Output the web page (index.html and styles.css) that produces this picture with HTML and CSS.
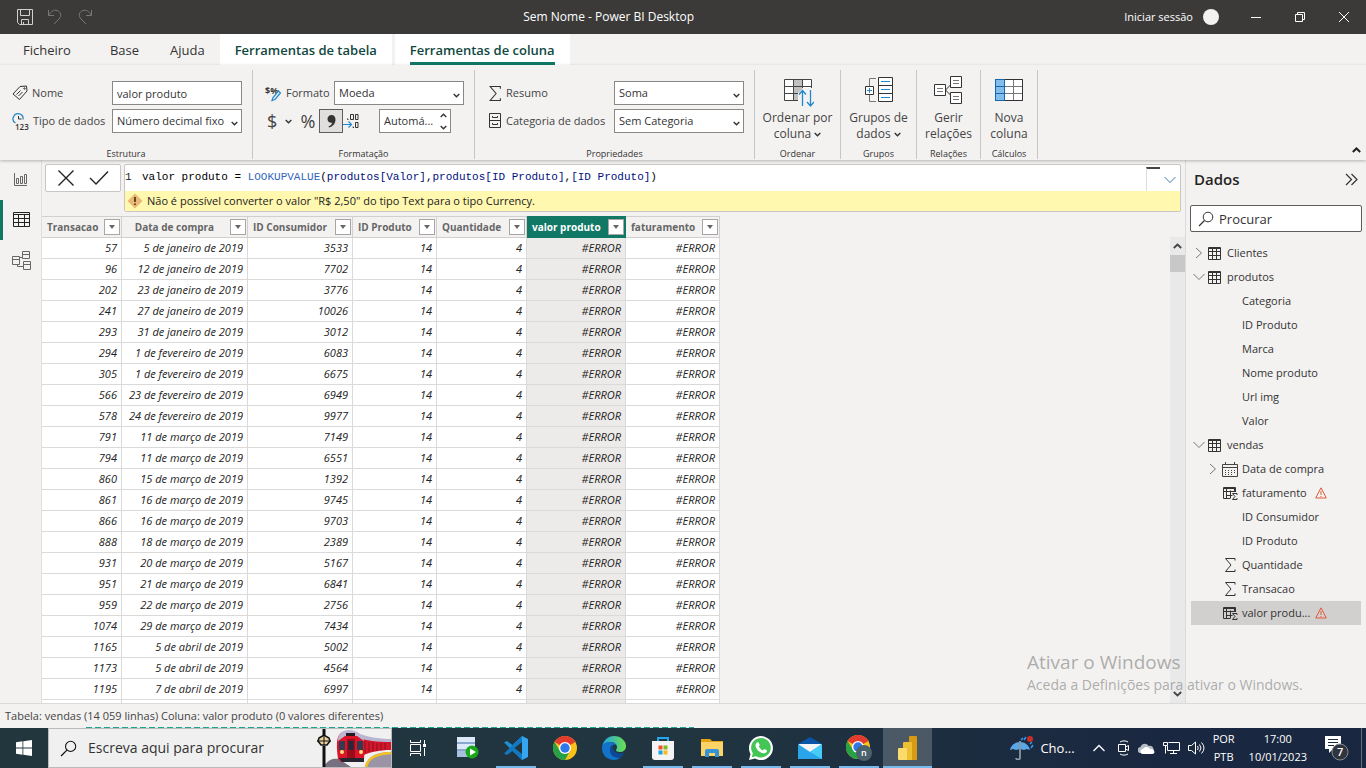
FILE: index.html
```html
<!DOCTYPE html>
<html lang="pt">
<head>
<meta charset="utf-8">
<title>Sem Nome - Power BI Desktop</title>
<link rel="stylesheet" href="styles.css">
</head>
<body>
<svg class="defs" aria-hidden="true">
  <symbol id="i-table" viewBox="0 0 13 13"><path d="M.5.5h12v12H.5zM.5 1.500h12M.5 4.500h12M.5 8.500h12M4.500 2v10.500M8.500 2v10.500" fill="none" stroke="#333"/></symbol>
  <symbol id="i-right" viewBox="0 0 10 12"><path d="M2 1l5.500 5L2 11" fill="none" stroke="#777"/></symbol>
  <symbol id="i-down" viewBox="0 0 12 8"><path d="M.5 1L6 6.500 11.500 1" fill="none" stroke="#777"/></symbol>
  <symbol id="i-sigma" viewBox="0 0 12 14"><path d="M11 2.500V.5H1.500L7 7l-5.500 6.500H11v-2" fill="none" stroke="#333"/></symbol>
  <symbol id="i-calc" viewBox="0 0 16 14"><path d="M8 12.500H1.500V1.500h12V6M1.500 2.500h12M1.500 5.500h12M4.500 2.500v10M8.500 4.500v8M4.500 9.500h6M12.500 2.500V6" fill="none" stroke="#333"/><path d="M15 9V7.500h-4.500L13 10.500l-2.500 3H15V12" fill="none" stroke="#333"/></symbol>
  <symbol id="i-warn" viewBox="0 0 12 12"><path d="M6 .8L11.300 11H.7z" fill="none" stroke="#e0583a"/><path d="M6 4v4M6 9v1" stroke="#e0583a"/></symbol>
  <symbol id="i-chev" viewBox="0 0 7 5"><path d="M.7.9l2.800 2.800L6.300.9" fill="none" stroke="#333" stroke-width="1.400"/></symbol>
  <symbol id="i-lens" viewBox="0 0 16 16"><circle cx="10" cy="6" r="4.800" fill="none" stroke="currentColor"/><path d="M6.500 9.500L1 15" stroke="currentColor" stroke-width="1.200"/></symbol>
  <symbol id="chrome" viewBox="0 0 24 24"><circle cx="12" cy="12" r="12" fill="#fbc116"/><path d="M12 12L1.600 6A12 12 0 0 1 22.400 6z" fill="#e33b2e"/><path d="M1.600 6A12 12 0 0 0 12 24l5-9-5-3-5 3z" fill="#27a145"/><circle cx="12" cy="12" r="6" fill="#fff"/><circle cx="12" cy="12" r="4.700" fill="#2f78ec"/></symbol>
</svg>

<header class="titlebar">
  <div class="quick">
    <button aria-label="Guardar"><svg width="16" height="16" viewBox="0 0 16 16" fill="none" stroke="#d0d0d0"><path d="M.5.500h15v15H2.500l-2-2zM3.500.5v6h9v-6M4.500 15.500v-5h7v5M6.500 13v2.500"/></svg></button>
    <button aria-label="Anular"><svg width="16" height="16" viewBox="0 0 16 16" fill="none" stroke="#777"><path d="M1.500 1v5.500H7M1.500 6.500C4 2 7 .5 10 1.500c4 1.500 5 5 2 8.500l-5 5"/></svg></button>
    <button aria-label="Refazer"><svg width="16" height="16" viewBox="0 0 16 16" fill="none" stroke="#777"><path d="M14.500 1v5.500H9M14.500 6.500C12 2 9 .5 6 1.500 2 3 1 6.500 4 10l5 5"/></svg></button>
  </div>
  <h1>Sem Nome - Power BI Desktop</h1>
  <div class="account">
    <button class="signin">Iniciar sessão</button><span class="avatar"></span>
    <button class="win" aria-label="Minimizar"><svg width="12" height="12"><path d="M1 6.500h10" stroke="#fff"/></svg></button>
    <button class="win" aria-label="Restaurar"><svg width="12" height="12" fill="none" stroke="#fff"><path d="M1.500 3.500h7v7h-7zM3.500 3.500v-2h7v7h-2"/></svg></button>
    <button class="win" aria-label="Fechar"><svg width="12" height="12"><path d="M1 1l10 10M11 1L1 11" stroke="#fff"/></svg></button>
  </div>
</header>

<nav class="tabs">
  <button class="tab file">Ficheiro</button>
  <button class="tab">Base</button>
  <button class="tab">Ajuda</button>
  <button class="tab ctx">Ferramentas de tabela</button>
  <button class="tab ctx current"><span>Ferramentas de coluna</span></button>
</nav>

<section class="ribbon">
  <div class="group g-structure">
    <div class="rows">
      <div class="row">
        <svg width="16" height="16" viewBox="0 0 16 16" fill="none" stroke="#333"><path d="M1 9l7-7.500 6.500-.5.500 5-7.500 8.500zM4.500 9.500l4-4M6.500 11l4-4"/><circle cx="12.500" cy="3.500" r=".7"/></svg>
        <label for="name">Nome</label><input id="name" class="box" value="valor produto">
      </div>
      <div class="row">
        <svg width="17" height="17" viewBox="0 0 17 17"><path d="M3.500 10A5 5 0 1 1 11 6.500" fill="none" stroke="#2b88c8" stroke-width="1.300"/><path d="M6.500 3v3h3" fill="none" stroke="#333"/><text x="3" y="16.500" class="icon-num">123</text></svg>
        <label for="type">Tipo de dados</label><select id="type" class="box"><option>Número decimal fixo</option></select>
      </div>
    </div>
    <h2>Estrutura</h2>
  </div>
  <div class="group g-format">
    <div class="rows">
      <div class="row">
        <svg width="17" height="17" viewBox="0 0 17 17"><text x="0" y="9" class="icon-cur">$%</text><path d="M7 15.500l1-3 5.500-6.500 2 2-5.500 6.500z" fill="#dbeefa" stroke="#2b88c8" stroke-width="1.200"/></svg>
        <label for="format">Formato</label><select id="format" class="box"><option>Moeda</option></select>
      </div>
      <div class="row tools">
        <button class="tool dollar">$<svg width="7" height="5"><use href="#i-chev"/></svg></button>
        <button class="tool pct">%</button>
        <button class="tool comma" aria-label="Separador de milhares"><svg width="9" height="13" viewBox="0 0 9 13"><path d="M4.500 0C7 0 8.500 1.800 8.500 4.500c0 4-2.500 7-6.500 8l-.5-1c2-.8 3.200-2 3.600-3.800C2.500 8.300.5 6.500.5 4 .5 1.700 2.200 0 4.500 0z" fill="#333"/></svg></button>
        <button class="tool dec" aria-label="Casas decimais"><svg width="16" height="17" viewBox="0 0 16 17" fill="none"><path d="M7.500 1.500h3v5h-3zM12.500 1.500H15v5h-2.500zM12.500 9.500H15v5h-2.500zM4 6h1v1M9.500 14h1v1" stroke="#333"/><path d="M0 11.500h8M5.500 8.500l3 3-3 3" stroke="#1e88d0" stroke-width="1.200"/></svg></button>
        <div class="spin box"><input aria-label="Casas decimais" value="Automá..."><span><button aria-label="Mais"><svg class="flip" width="7" height="5"><use href="#i-chev"/></svg></button><button aria-label="Menos"><svg width="7" height="5"><use href="#i-chev"/></svg></button></span></div>
      </div>
    </div>
    <h2>Formatação</h2>
  </div>
  <div class="group g-props">
    <div class="rows">
      <div class="row"><svg width="14" height="15"><use href="#i-sigma"/></svg><label for="sum">Resumo</label><select id="sum" class="box"><option>Soma</option></select></div>
      <div class="row"><svg width="14" height="16" viewBox="0 0 14 16" fill="none" stroke="#333"><path d="M1.500.5h11v14h-11zM1.500 7.500h11M4.500 3v1.500h5V3M4.500 10v1.500h5V10"/></svg><label for="cat">Categoria de dados</label><select id="cat" class="box"><option>Sem Categoria</option></select></div>
    </div>
    <h2>Propriedades</h2>
  </div>
  <div class="group g-sort">
    <button class="big"><svg width="32" height="32" viewBox="0 0 32 32" fill="none"><path d="M2.500 3.500h27v21h-27z" fill="#fff"/><path d="M11.500 3.500h9v21h-9z" fill="#c0c0c0"/><path d="M16 25V17l6-5h9v13z" fill="#f3f2f1"/><path d="M29.500 12V3.500h-27v21H16M2.500 10.500h27M2.500 17.500H16M11.500 3.500v21M20.500 3.500V12" stroke="#444"/><path d="M20.500 30V15M17 18.500l3.500-4 3.500 4M28.500 14v15M25 26l3.500 4 3.500-4" stroke="#1e88d0" stroke-width="1.300"/></svg>
    <span>Ordenar por<br>coluna<svg width="7" height="5"><use href="#i-chev"/></svg></span></button>
    <h2>Ordenar</h2>
  </div>
  <div class="group g-groups">
    <button class="big"><svg width="32" height="32" viewBox="0 0 32 32" fill="none"><path d="M15.500 1.500h14v24h-14zM15.500 9.500h14M15.500 17.500h14M2.500 10.500h8v8h-8z" stroke="#333" fill="#fff"/><path d="M6.500 10V2.500H13M6.500 19v6.500H13" stroke="#777"/><path d="M18 5.500h9M18 13.500h9M18 21.500h9M4 14.500h5M6.500 12v5" stroke="#1e88d0"/></svg>
    <span>Grupos de<br>dados<svg width="7" height="5"><use href="#i-chev"/></svg></span></button>
    <h2>Grupos</h2>
  </div>
  <div class="group g-rel">
    <button class="big"><svg width="32" height="32" viewBox="0 0 32 32" fill="none" stroke="#333"><path d="M2.500 8.500h11v11h-11zM18.500.5h11v11h-11zM18.500 16.500h11v11h-11z" fill="#fff"/><path d="M13.500 14l5-5M13.500 14l5 5"/><path d="M5 12.500h6M5 15.500h6M21 4.500h6M21 7.500h6M21 20.500h6M21 23.500h6" stroke="#777"/></svg>
    <span>Gerir<br>relações</span></button>
    <h2>Relações</h2>
  </div>
  <div class="group g-calc">
    <button class="big"><svg width="32" height="32" viewBox="0 0 32 32" fill="none"><path d="M2.500 3.500h27v21h-27z" fill="#fff"/><path d="M2.500 3.500h9v21h-9z" fill="#83bdeb"/><path d="M11.500 3.500h18v21h-18M11.500 10.500h18M11.500 17.500h18M20.500 3.500v21" stroke="#777"/><path d="M2.500 24.500v-21h27v21z" stroke="#333"/><path d="M2.500 3.500h9v21h-9zM2.500 10.500h9M2.500 17.500h9" stroke="#1668ad"/></svg>
    <span>Nova<br>coluna</span></button>
    <h2>Cálculos</h2>
  </div>
  <button class="collapse" aria-label="Fechar friso"><svg width="9" height="6" viewBox="0 0 9 6"><path d="M.8 5l3.700-3.500L8.200 5" fill="none" stroke="#222" stroke-width="2"/></svg></button>
</section>

<main class="work">
  <nav class="views">
    <button aria-label="Relatório"><svg width="16" height="16" viewBox="0 0 16 16" fill="none" stroke="#666"><path d="M1.500 1v12.500H14M3.500 6.500h2v5h-2zM7.500 4.500h2v7h-2zM11.500 2.500h2v9h-2z"/></svg></button>
    <button class="on" aria-label="Dados"><svg width="17" height="16" viewBox="0 0 17 16" fill="none" stroke="#222"><path d="M.5.500h16v14H.5zM.5 2.500h16M.5 6.500h16M.5 10.500h16M5.500 2.500v12M11.500 2.500v12"/></svg></button>
    <button aria-label="Modelo"><svg width="19" height="19" viewBox="0 0 19 19" fill="none" stroke="#666"><path d="M10.500.5h7v7h-7zM10.500 3.500h7M.5 5.500h7v8h-7zM.5 8.500h7M11.500 10.500h7v8h-7zM11.500 13.500h7M7.500 6.500h3M5.500 13.500v2h6"/></svg></button>
  </nav>

  <section class="content">
    <div class="formula">
      <div class="commit">
        <button aria-label="Cancelar"><svg width="18" height="18"><path d="M1.500 1.500l15 15M16.500 1.500l-15 15" stroke="#222" stroke-width="1.400"/></svg></button>
        <button aria-label="Confirmar"><svg width="20" height="16"><path d="M1 8l6 6L19 1.500" fill="none" stroke="#222" stroke-width="1.400"/></svg></button>
      </div>
      <div class="editor">
        <div class="line">
          <code><span class="num">1</span>valor produto = <b>LOOKUPVALUE</b>(<i>produtos[Valor]</i>,<i>produtos[ID Produto]</i>,<i>[ID Produto]</i>)</code>
          <span class="ruler"></span>
          <button aria-label="Expandir"><svg width="12" height="8" viewBox="0 0 12 8"><path d="M.5 1L6 6.500 11.500 1" fill="none" stroke="#3d7fb0"/></svg></button>
        </div>
        <p class="error"><svg width="16" height="16" viewBox="0 0 16 16"><path d="M8 .5L15.500 8 8 15.500.5 8z" fill="#e8b878"/><path d="M8 4v5M8 10.500v1.500" stroke="#5a3a10" stroke-width="1.800"/></svg>Não é possível converter o valor "R$ 2,50" do tipo Text para o tipo Currency.</p>
      </div>
    </div>
    <div class="gridarea">
      <div class="viewport">
      <table class="data">
        <colgroup><col class="c1"><col class="c2"><col class="c3"><col class="c4"><col class="c5"><col class="c6"><col class="c7"></colgroup>
        <thead><tr>
          <th><div>Transacao<button aria-label="Filtrar Transacao"></button></div></th>
          <th><div><span>Data de compra</span><button aria-label="Filtrar Data de compra"></button></div></th>
          <th><div>ID Consumidor<button aria-label="Filtrar ID Consumidor"></button></div></th>
          <th><div>ID Produto<button aria-label="Filtrar ID Produto"></button></div></th>
          <th><div>Quantidade<button aria-label="Filtrar Quantidade"></button></div></th>
          <th class="sel"><div>valor produto<button aria-label="Filtrar valor produto"></button></div></th>
          <th><div>faturamento<button aria-label="Filtrar faturamento"></button></div></th>
        </tr></thead>
        <tbody>
          <tr><td>57<td>5 de janeiro de 2019<td>3533<td>14<td>4<td>#ERROR<td>#ERROR</tr>
          <tr><td>96<td>12 de janeiro de 2019<td>7702<td>14<td>4<td>#ERROR<td>#ERROR</tr>
          <tr><td>202<td>23 de janeiro de 2019<td>3776<td>14<td>4<td>#ERROR<td>#ERROR</tr>
          <tr><td>241<td>27 de janeiro de 2019<td>10026<td>14<td>4<td>#ERROR<td>#ERROR</tr>
          <tr><td>293<td>31 de janeiro de 2019<td>3012<td>14<td>4<td>#ERROR<td>#ERROR</tr>
          <tr><td>294<td>1 de fevereiro de 2019<td>6083<td>14<td>4<td>#ERROR<td>#ERROR</tr>
          <tr><td>305<td>1 de fevereiro de 2019<td>6675<td>14<td>4<td>#ERROR<td>#ERROR</tr>
          <tr><td>566<td>23 de fevereiro de 2019<td>6949<td>14<td>4<td>#ERROR<td>#ERROR</tr>
          <tr><td>578<td>24 de fevereiro de 2019<td>9977<td>14<td>4<td>#ERROR<td>#ERROR</tr>
          <tr><td>791<td>11 de março de 2019<td>7149<td>14<td>4<td>#ERROR<td>#ERROR</tr>
          <tr><td>794<td>11 de março de 2019<td>6551<td>14<td>4<td>#ERROR<td>#ERROR</tr>
          <tr><td>860<td>15 de março de 2019<td>1392<td>14<td>4<td>#ERROR<td>#ERROR</tr>
          <tr><td>861<td>16 de março de 2019<td>9745<td>14<td>4<td>#ERROR<td>#ERROR</tr>
          <tr><td>866<td>16 de março de 2019<td>9703<td>14<td>4<td>#ERROR<td>#ERROR</tr>
          <tr><td>888<td>18 de março de 2019<td>2389<td>14<td>4<td>#ERROR<td>#ERROR</tr>
          <tr><td>931<td>20 de março de 2019<td>5167<td>14<td>4<td>#ERROR<td>#ERROR</tr>
          <tr><td>951<td>21 de março de 2019<td>6841<td>14<td>4<td>#ERROR<td>#ERROR</tr>
          <tr><td>959<td>22 de março de 2019<td>2756<td>14<td>4<td>#ERROR<td>#ERROR</tr>
          <tr><td>1074<td>29 de março de 2019<td>7434<td>14<td>4<td>#ERROR<td>#ERROR</tr>
          <tr><td>1165<td>5 de abril de 2019<td>5002<td>14<td>4<td>#ERROR<td>#ERROR</tr>
          <tr><td>1173<td>5 de abril de 2019<td>4564<td>14<td>4<td>#ERROR<td>#ERROR</tr>
          <tr><td>1195<td>7 de abril de 2019<td>6997<td>14<td>4<td>#ERROR<td>#ERROR</tr>
          <tr><td><td><td><td><td><td><td></tr>
        </tbody>
      </table>
      </div>
      <div class="scroll">
        <button aria-label="Para cima"><svg width="9" height="6" viewBox="0 0 9 6"><path d="M.8 5l3.700-3.500L8.200 5" fill="none" stroke="#444" stroke-width="1.800"/></svg></button>
        <span class="thumb"></span>
        <button class="end" aria-label="Para baixo"><svg width="9" height="6" viewBox="0 0 9 6"><path d="M.8 1l3.700 3.500L8.200 1" fill="none" stroke="#444" stroke-width="1.800"/></svg></button>
      </div>
    </div>
  </section>

  <aside class="fields">
    <div class="fhead"><h2>Dados</h2><button aria-label="Recolher"><svg width="13" height="13" viewBox="0 0 13 13" fill="none" stroke="#333" stroke-width="1.200"><path d="M1 1l5.500 5.500L1 12M6.500 1L12 6.500 6.500 12"/></svg></button></div>
    <label class="search"><svg width="16" height="16"><use href="#i-lens"/></svg><input aria-label="Procurar" placeholder="Procurar"></label>
    <ul class="tree">
      <li><svg class="tw" width="10" height="12"><use href="#i-right"/></svg><svg width="13" height="13"><use href="#i-table"/></svg><span>Clientes</span></li>
      <li><svg class="tw" width="12" height="8"><use href="#i-down"/></svg><svg width="13" height="13"><use href="#i-table"/></svg><span>produtos</span></li>
      <li class="leaf">Categoria</li>
      <li class="leaf">ID Produto</li>
      <li class="leaf">Marca</li>
      <li class="leaf">Nome produto</li>
      <li class="leaf">Url img</li>
      <li class="leaf">Valor</li>
      <li><svg class="tw" width="12" height="8"><use href="#i-down"/></svg><svg width="13" height="13"><use href="#i-table"/></svg><span>vendas</span></li>
      <li class="kid date"><svg class="tw" width="10" height="12"><use href="#i-right"/></svg><svg width="16" height="15" viewBox="0 0 16 15" fill="none" stroke="#444"><path d="M.5 2.500h15v12H.5zM.5 5.500h15M3.500 0v3M12.500 0v3"/><path d="M3 8.500h10M3 10.500h10M3 12.500h7" stroke-dasharray="1 2"/></svg><span>Data de compra</span></li>
      <li class="kid"><svg width="16" height="14"><use href="#i-calc"/></svg><span class="short">faturamento</span><svg width="12" height="12"><use href="#i-warn"/></svg></li>
      <li class="leaf">ID Consumidor</li>
      <li class="leaf">ID Produto</li>
      <li class="kid"><svg width="16" height="14"><use href="#i-sigma"/></svg><span>Quantidade</span></li>
      <li class="kid"><svg width="16" height="14"><use href="#i-sigma"/></svg><span>Transacao</span></li>
      <li class="kid picked"><svg width="16" height="14"><use href="#i-calc"/></svg><span class="short">valor produ...</span><svg width="12" height="12"><use href="#i-warn"/></svg></li>
    </ul>
  </aside>
  <div class="watermark"><strong>Ativar o Windows</strong><span>Aceda a Definições para ativar o Windows.</span></div>
</main>

<footer class="status">Tabela: vendas (14 059 linhas) Coluna: valor produto (0 valores diferentes)</footer>

<div class="taskbar">
  <button class="start" aria-label="Iniciar"><svg width="16" height="16" viewBox="0 0 16 16" fill="#fff"><path d="M0 2.200l6.500-.9v6.200H0zM7.300 1.200L16 0v7.500H7.300zM0 8.400h6.500v6.300L0 13.800zM7.300 8.400H16V16l-8.700-1.200z"/></svg></button>
  <div class="tsearch"><svg width="17" height="17"><use href="#i-lens"/></svg><input aria-label="Procurar no Windows" placeholder="Escreva aqui para procurar">
    <svg class="train" width="76" height="38" viewBox="0 0 76 38">
      <path d="M8 38c6-8 10-9 16-8l12 8z" fill="#777080"/>
      <path d="M42 5c12 5 22 6 34 6v10c-12 0-22 2-34 8z" fill="#d3162a"/>
      <path d="M40 3c12 5 24 7 36 7v3c-14 0-24-1-36-5z" fill="#b9b4cf"/>
      <path d="M50 12v12M54 13v10M58 13v9M62 14v8M66 14v7M70 14v7" stroke="#8a0f1f"/>
      <path d="M50 38c2-10 10-15 26-15v15z" fill="#9a94a4"/><path d="M51 38c2-9 9-13 25-14" fill="none" stroke="#f5c21d" stroke-width="2.500"/>
      <path d="M23 30C20 8 23 2 34 2s17 6 15 28l-4 3H26z" fill="#da1429"/><path d="M23 12C23 5 27 1 34 1s14 4 15 11l-7-5H30z" fill="#bdb7d3"/>
      <path d="M24 12h6v9h-6zM42 12h6v9h-6z" fill="#343a50"/><path d="M32 10h8v20h-8z" fill="#9c0b1c"/><path d="M33.500 12h5v9h-5z" fill="#25283b"/><path d="M31 4h9v3h-9z" fill="#281b20"/>
      <circle cx="27" cy="23" r="2" fill="#ffe37a"/><circle cx="46" cy="23" r="2" fill="#ffe37a"/><path d="M24 29h25v4H27z" fill="#262430"/>
    </svg>
    <svg class="lamp" width="16" height="38" viewBox="0 0 16 38"><path d="M8 0v6M8 17v21" stroke="#111" stroke-width="3"/><path d="M3 9l5-3 5 3 1 3-3 4H5l-3-4z" fill="#e8d29a" stroke="#111" stroke-width="1.500"/><path d="M1 12h14M8 5v11" stroke="#111"/></svg>
  </div>
  <button class="app" aria-label="Vista de tarefas"><svg width="18" height="18" viewBox="0 0 18 18" fill="none" stroke="#fff"><path d="M1.500 1v2.500h10V1M1.500 5.500h10v7h-10zM1.500 17v-2.500h10V17M15.500 1v4M15.500 9v8"/><path d="M14 5h3v3h-3z" fill="#fff" stroke="none"/></svg></button>
  <button class="app" aria-label="Servidor"><svg width="24" height="24" viewBox="0 0 24 24"><path d="M2 1h18v20H2z" fill="#a9bfe0"/><path d="M2 1h18v5H2zM2 8h18v5H2z" fill="#dce8f8"/><path d="M2 7h18M2 14h18" stroke="#6e8fc0"/><circle cx="17" cy="16" r="6.500" fill="#18a818"/><path d="M15 12.500l6 3.500-6 3.500z" fill="#fff"/></svg></button>
  <button class="app run" aria-label="Visual Studio Code"><svg width="24" height="24" viewBox="0 0 24 24"><path d="M18 0L8.500 9 3 5 0 6.500 18 24z" fill="#1f8fd8"/><path d="M18 24L8.500 15 3 19 0 17.500 18 0z" fill="#1279c0"/><path d="M18 0l6 3v18l-6 3z" fill="#35a6f0"/><path d="M18 6v12l-7.500-6z" fill="#21353f"/></svg></button>
  <button class="app" aria-label="Chrome"><svg width="24" height="24"><use href="#chrome"/></svg></button>
  <button class="app" aria-label="Edge"><svg width="24" height="24" viewBox="0 0 24 24"><defs><linearGradient id="eg"><stop offset="0" stop-color="#1fa2e6"/><stop offset="1" stop-color="#6be04e"/></linearGradient></defs><path d="M0 12C1 4 6 0 12 0c7 0 12 5 12 10 0 4-3 6-6 6-3 0-4-1-4-2s1-1 1-3c0-3-3-5-7-5-5 0-8 4-8 6z" fill="url(#eg)"/><path d="M0 12c0-3 3-6 8-6 3 0 5 1 6 3-4-1-6 2-6 5 0 5 5 9 11 7-2 2-4 3-7 3C5 24 0 19 0 12z" fill="#1173ca"/><path d="M8 14c0-2 1-4 3-4.500-1 5 3 9.500 11 7.500-1 2-2 3-3 4-6 2-11-2-11-7z" fill="#0c4a98"/></svg></button>
  <button class="app run" aria-label="Store"><svg width="24" height="24" viewBox="0 0 24 24"><path d="M7 6V2h10v4" fill="none" stroke="#22a7ee" stroke-width="2"/><path d="M1 5h22v16a3 3 0 0 1-3 3H4a3 3 0 0 1-3-3z" fill="#f4f4f4"/><path d="M7.500 9.500h4v4h-4z" fill="#f0502a"/><path d="M12.500 9.500h4v4h-4z" fill="#80bc1e"/><path d="M7.500 14.500h4v4h-4z" fill="#13a3ea"/><path d="M12.500 14.500h4v4h-4z" fill="#fcb813"/></svg></button>
  <button class="app run" aria-label="Explorador"><svg width="24" height="24" viewBox="0 0 24 24"><path d="M1 3h9l2 2h11v15H1z" fill="#e8a315"/><path d="M1 6h22v14H1z" fill="#fbd367"/><path d="M5 21v-6a2 2 0 0 1 2-2h10a2 2 0 0 1 2 2v6h-4v-4H9v4z" fill="#3793d8"/></svg></button>
  <button class="app run" aria-label="WhatsApp"><svg width="24" height="24" viewBox="0 0 24 24"><path d="M0 24l1.500-6A12 12 0 1 1 6 22.500z" fill="#fff"/><path d="M2.800 21.200l1-4A9.800 9.800 0 1 1 7 20.200z" fill="#43c655"/><path d="M8 6.500l1.500-.2 1.300 3-1 1.300c1 2 2.300 3 4 3.800l1.400-1.500 2.800 1.400c0 2-1.500 3.200-3.500 3-4-.6-7.800-4.300-8-8 0-1.200.6-2.200 1.500-2.800z" fill="#fff"/></svg></button>
  <button class="app run" aria-label="Correio"><svg width="24" height="24" viewBox="0 0 24 24"><path d="M0 8l12-7 12 7v5H0z" fill="#0a55a8"/><path d="M1 8h22v8H1z" fill="#f2f4f7"/><path d="M0 8l12 8 12-8v15H0z" fill="#2ba5ea"/><path d="M24 8v15L12 16z" fill="#45cdf8"/></svg></button>
  <button class="app run" aria-label="Chrome, perfil n"><svg width="26" height="26" viewBox="0 0 26 26"><use href="#chrome" width="24" height="24"/><circle cx="18" cy="18" r="8" fill="#4b626c"/><text x="15" y="21" class="profile">n</text></svg></button>
  <button class="app active" aria-label="Power BI Desktop"><svg width="24" height="24" viewBox="0 0 24 24"><path d="M13 1a1 1 0 0 1 1-1h6a1 1 0 0 1 1 1v23h-8z" fill="#d99a13"/><path d="M7 7a1 1 0 0 1 1-1h7a1 1 0 0 1 1 1v17H7z" fill="#eebf32"/><path d="M2 13a1 1 0 0 1 1-1h7a1 1 0 0 1 1 1v11H3a1 1 0 0 1-1-1z" fill="#fadb6b"/></svg></button>
  <div class="tray">
    <button class="weather"><svg width="24" height="24" viewBox="0 0 24 24"><path d="M0 14C1 9 5 6 10 6s9 3 10 8l-3-1-3 1-4-1-4 1-3-1z" fill="#5aa7e8"/><path d="M10 5v17c0 2-4 2-4 0" fill="none" stroke="#8b98a5" stroke-width="1.800"/><path d="M13 2l-2 2M16 1l-2 3M22 6l-2 2M23 9l-2 3" stroke="#2e9bf0" stroke-width="1.500"/><circle cx="20" cy="3" r="3" fill="#cf2c22"/></svg>Cho...</button>
    <button aria-label="Ícones ocultos"><svg width="12" height="8"><path d="M.5 7L6 1.500 11.500 7" fill="none" stroke="#fff" stroke-width="1.300"/></svg></button>
    <button class="meet" aria-label="Reunir"><svg width="12" height="16" viewBox="0 0 12 16" fill="none" stroke="#fff"><path d="M2 2c2-1.500 6-1.500 8 0M2 14c2 1.500 6 1.500 8 0M.5 4.500h7v7h-7zM7.500 7l3-1.500v5L7.500 9"/></svg></button>
    <button aria-label="OneDrive"><svg width="17" height="11" viewBox="0 0 17 11"><path d="M3 10a3 3 0 0 1-.5-6C4 0 9 0 10.500 3 15 2 16 6 16 10z" fill="#b4bcc6"/><path d="M5 11a2.500 2.500 0 0 1 0-5c2-3 6-2 7 0 5-.5 6 5 2 5z" fill="#fff"/></svg></button>
    <button aria-label="Rede"><svg width="17" height="14" viewBox="0 0 17 14" fill="none" stroke="#fff"><path d="M5.500 1.500h11v8H4.500V5M.5 1.500h4v3h-4zM2.500 4.500v8M10.500 9.500v3M7 12.500h7"/></svg></button>
    <button aria-label="Volume"><svg width="17" height="14" viewBox="0 0 17 14" fill="none" stroke="#fff"><path d="M.5 4.500h3L7.500 1v12L3.500 9.500h-3zM9.500 5q1.500 2 0 4M11.500 3.500q3 3.500 0 7M13.500 1.500q5 5.500 0 11"/></svg></button>
    <button class="lang">POR<br>PTB</button>
    <button class="clock">17:00<br>10/01/2023</button>
    <button class="notif" aria-label="Notificações"><svg width="26" height="26" viewBox="0 0 26 26"><path d="M1 1h16v13H9l-4 4v-4H1z" fill="#fff"/><path d="M4 4.500h10M4 7.500h10M4 10.500h6" stroke="#1c2b40"/><circle cx="16" cy="17" r="8" fill="#30353d" stroke="#858b92"/><text x="13" y="21" class="count">7</text></svg></button>
    <span class="peek"></span>
  </div>
</div>
</body>
</html>
```
FILE: styles.css
```css
* { box-sizing: border-box; }
body { margin: 0; height: 100vh; display: flex; flex-direction: column; overflow: hidden; background: #f3f2f1; color: #333; font: 12px/16px "Open Sans", "Noto Sans", sans-serif; }
button { font: inherit; color: inherit; background: none; border: 0; padding: 0; margin: 0; display: flex; align-items: center; justify-content: center; }
input, select { font: inherit; color: inherit; min-width: 0; }
h1, h2, p, ul { margin: 0; padding: 0; font: inherit; }
svg { flex: none; display: block; }
.defs { width: 0; height: 0; position: absolute; }

.titlebar { flex: none; height: 34px; background: #3b3a39; color: #fff; display: flex; align-items: center; }
.titlebar h1 { flex: 1; text-align: center; }
.quick { display: flex; gap: 14px; padding-left: 17px; }
.account { display: flex; align-items: center; }
.signin { font-size: 11px; white-space: nowrap; }
.avatar { width: 16px; height: 16px; flex: none; border-radius: 50%; background: #f3f2f1; margin: 0 15px 0 10px; }
.win { width: 44px; height: 34px; }

.tabs { flex: none; display: flex; height: 31px; font-size: 13px; color: #333; }
.tab { padding: 0 15px 0 16px; }
.tab.file { padding: 0 23px; }
.tab.ctx { background: #fff; color: #10483f; font-weight: 600; padding: 0 15px; }
.tab.current { margin-left: 3px; }
.tab.current span { height: 31px; line-height: 32px; border-bottom: 3px solid #117865; }

.ribbon { flex: none; height: 95px; display: flex; padding-top: 5px; position: relative; z-index: 1; box-shadow: 0 1px 3px #0004; color: #444; }
.group { height: 89px; flex: none; border-right: 1px solid #c8c6c4; display: flex; flex-direction: column; justify-content: space-between; align-items: center; }
.group h2 { font-size: 9px; line-height: 10px; color: #333; }
.rows { display: flex; flex-direction: column; gap: 4px; padding-top: 11px; width: 100%; font-size: 11px; }
.row { display: flex; align-items: center; height: 24px; padding: 0 10px 0 12px; gap: 4px; }
.row label { flex: 1; white-space: nowrap; }
.box { width: 130px; height: 24px; flex: none; border: 1px solid #8a8886; border-radius: 0; background: #fff; color: #333; padding: 0 4px; }
select.box { appearance: none; background: #fff url("data:image/svg+xml,%3Csvg xmlns='http://www.w3.org/2000/svg' width='7' height='5'%3E%3Cpath d='M.7.9l2.800 2.800L6.300.9' fill='none' stroke='%23333' stroke-width='1.400'/%3E%3C/svg%3E") no-repeat right 3px top 11px; }
.icon-num { font: 600 8px "Open Sans", sans-serif; fill: #333; }
.icon-cur { font: 700 9px "Open Sans", sans-serif; fill: #333; }
.g-structure { width: 253px; }
.g-format { width: 222px; }
.g-props { width: 280px; }
.g-sort { width: 86px; }
.g-groups { width: 76px; }
.g-rel { width: 64px; }
.g-calc { width: 57px; }
.g-props .row { padding-left: 13px; }
.tools { gap: 0; }
.tool { height: 24px; font-size: 18px; }
.dollar { width: 32px; gap: 8px; justify-content: flex-start; padding-left: 2px; }
.pct { width: 22px; }
.comma { width: 24px; border: 1px solid #605e5c; background: #e1dfdd; }
.dec { width: 16px; }
.spin { width: 72px; display: flex; align-items: center; margin-left: 20px; padding: 0 3px 0 4px; }
.spin input { border: 0; padding: 0; flex: 1; width: 0; background: none; }
.spin span { display: flex; flex-direction: column; gap: 7px; }
.flip { transform: rotate(180deg); }
.big { flex-direction: column; padding-top: 6px; gap: 2px; }
.big span { line-height: 16px; text-align: center; white-space: nowrap; }
.big span svg { display: inline-block; margin-left: 3px; vertical-align: 1px; }
.collapse { margin: auto 5px 7px auto; }

.work { flex: 1; min-height: 0; display: flex; position: relative; }
.views { width: 42px; flex: none; border-right: 1px solid #e1dfdd; }
.views button { width: 41px; height: 40px; border-left: 3px solid transparent; padding-right: 2px; }
.views .on { border-left-color: #117865; }
.content { flex: 1; min-width: 0; display: flex; flex-direction: column; }
.formula { flex: none; display: flex; gap: 3px; align-items: flex-start; padding: 4px 4px 4px 3px; }
.commit { display: flex; gap: 14px; width: 76px; height: 28px; justify-content: center; background: #fff; border: 1px solid #c8c6c4; border-radius: 2px; }
.editor { flex: 1; min-width: 0; border: 1px solid #c8c6c4; border-radius: 2px; background: #fff; }
.line { height: 26px; display: flex; }
code { flex: 1; font: 11px/24px "Liberation Mono", monospace; color: #000; white-space: pre; }
.num { display: inline-block; width: 17px; color: #222; }
code b { font-weight: 400; color: #3165bb; }
code i { font-style: normal; color: #001080; }
.ruler { width: 14px; border-left: 1px solid #ddd; border-top: 2px solid #444; margin-top: 2px; }
.line button { width: 20px; padding-top: 4px; }
.error { display: flex; align-items: center; gap: 4px; height: 20px; padding-left: 2px; background: #fff8ae; color: #222; font-size: 11px; white-space: nowrap; }

.gridarea { flex: 1; min-height: 0; display: flex; }
.viewport { flex: 1; min-width: 0; overflow: hidden; }
.data { table-layout: fixed; border-collapse: separate; border-spacing: 0; width: 678px; }
.c1 { width: 80px; } .c2 { width: 126px; } .c3 { width: 105px; } .c4 { width: 84px; } .c5 { width: 90px; } .c6 { width: 99px; } .c7 { width: 94px; }
th { height: 22px; padding: 0; border: 1px solid #d2d0ce; border-left: 0; color: #666; font-weight: 700; font-size: 10px; background: #f3f2f1; white-space: nowrap; }
th div { display: flex; align-items: center; justify-content: space-between; padding: 0 1px 0 5px; height: 20px; }
th span { flex: 1; text-align: center; padding-right: 8px; }
th button { width: 16px; height: 16px; flex: none; border: 1px solid #a6a6a6; background: #fff; }
th button::before { content: ""; border: 3px solid transparent; border-top: 4px solid #666; border-bottom: 0; }
th.sel { background: #117865; border-color: #117865; color: #fff; }
td { height: 21px; padding: 0 4px; border-right: 1px solid #dcdad8; border-bottom: 1px solid #dcdad8; background: #fff; text-align: right; font-style: italic; font-size: 11px; line-height: 18px; color: #222; white-space: nowrap; }
td:nth-child(6) { background: #edebe9; }
.scroll { width: 15px; margin-top: 21px; background: #e9e9e9; display: flex; flex-direction: column; }
.scroll button { height: 18px; width: 15px; }
.thumb { height: 17px; background: #c8c8c8; }
.scroll .end { margin-top: auto; }

.fields { width: 181px; flex: none; border-left: 1px solid #dcdad8; padding: 0 4px; }
.fhead { display: flex; justify-content: space-between; align-items: center; height: 38px; margin-bottom: 7px; padding: 0 4px; }
.fhead h2 { font-size: 15px; font-weight: 600; color: #252423; }
.search { display: flex; align-items: center; gap: 5px; height: 27px; background: #fff; border: 1px solid #605e5c; border-radius: 2px; padding-left: 7px; }
.search input { border: 0; background: none; padding: 0; flex: 1; font-size: 13px; }
input::placeholder { color: #333; opacity: 1; }
.tree { list-style: none; padding: 9px 1px 0; font-size: 11px; }
.tree li { height: 24px; display: flex; align-items: center; padding-left: 2px; white-space: nowrap; }
.tw { width: 12px; margin-right: 3px; }
.tree li > span { margin-left: 6px; }
.tree .leaf { padding-left: 51px; }
.tree .kid { padding-left: 31px; }
.tree .kid > span { margin-left: 4px; }
.tree .date { padding-left: 16px; }
.tree .short { width: 73px; }
.picked { background: #d2d0ce; }
.watermark { position: absolute; right: 54px; bottom: 9px; width: 285px; display: flex; flex-direction: column; color: #888a; font-size: 14px; line-height: 19px; pointer-events: none; white-space: nowrap; }
.watermark strong { font-weight: 400; font-size: 19px; line-height: 26px; }

.status { flex: none; height: 25px; line-height: 24px; padding-left: 5px; border-top: 1px solid #dcdad8; color: #444; font-size: 11px; background: repeating-linear-gradient(90deg, #20a28c 0 6px, #d8eee9 6px 9px) 86px 100% / 608px 1px no-repeat; }

.taskbar { flex: none; height: 40px; display: flex; background: linear-gradient(90deg, #21363d, #203540 50%, #1a2740 85%); color: #fff; }
.start { width: 48px; }
.tsearch { width: 344px; height: 40px; background: #f0f0f0; border: 1px solid #bbb; display: flex; align-items: center; padding-left: 11px; gap: 11px; position: relative; color: #111; margin-right: 1px; }
.tsearch input { border: 0; background: none; padding: 0; flex: 1; font-size: 14px; }
.train { position: absolute; right: 0; bottom: 0; }
.lamp { position: absolute; right: 59px; bottom: 0; }
.app { width: 49px; position: relative; }
.run::after { content: ""; position: absolute; left: 5px; right: 4px; bottom: 0; height: 2px; background: #76b9ed; }
.active { background: #4b5966; border-bottom: 2px solid #76b9ed; padding-top: 2px; }
.profile { font: 600 9px "Open Sans", sans-serif; fill: #fff; }
.tray { margin-left: auto; display: flex; align-items: center; gap: 8px; }
.tray button { height: 40px; }
.tray .weather { gap: 6px; font-size: 13px; margin-right: 10px; }
.tray .meet { margin-left: 5px; }
.lang, .clock { line-height: 18px; font-size: 11px; }
.clock { padding: 0 9px 0 6px; }
.tray .notif { margin-right: 3px; }
.count { font: 600 11px "Open Sans", sans-serif; fill: #fff; }
.peek { width: 5px; height: 40px; border-left: 1px solid #66707c; }
```
